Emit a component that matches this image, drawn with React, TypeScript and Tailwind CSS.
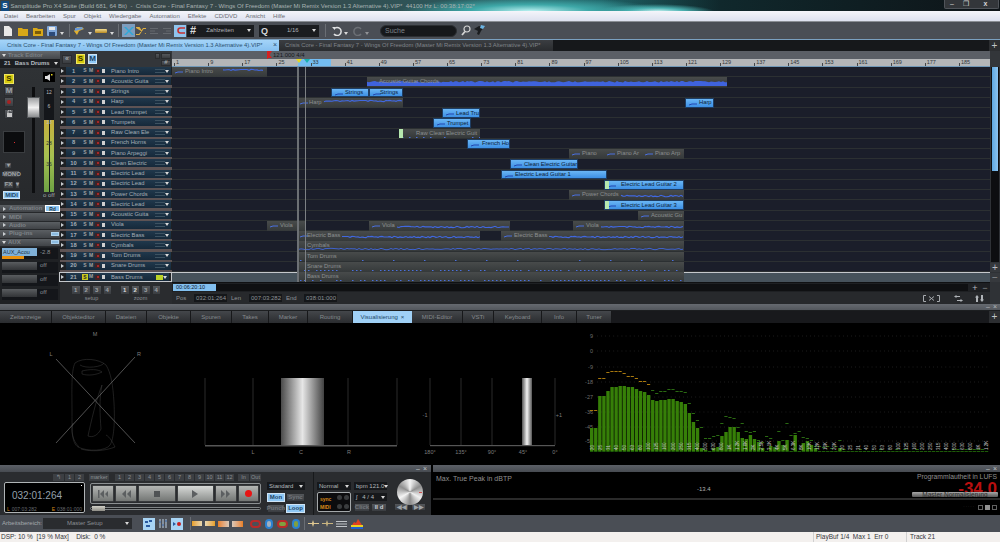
import * as React from "react";

const tracks = ["Piano Intro", "Acoustic Guita", "Strings", "Harp", "Lead Trumpet", "Trumpets", "Raw Clean Ele", "French Horns", "Piano Arpeggi", "Clean Electric", "Electric Lead", "Electric Lead", "Power Chords", "Electric Lead", "Acoustic Guita", "Viola", "Electric Bass", "Cymbals", "Tom Drums", "Snare Drums", "Bass Drums"];

const menu = ["Datei", "Bearbeiten", "Spur", "Objekt", "Wiedergabe", "Automation", "Effekte", "CD/DVD", "Ansicht", "Hilfe"];

const bottomTabs = [
  { name: "Zeitanzeige", w: 52 }, { name: "Objekteditor", w: 54 }, { name: "Dateien", w: 41 }, { name: "Objekte", w: 44 },
  { name: "Spuren", w: 41 }, { name: "Takes", w: 37 }, { name: "Marker", w: 39 }, { name: "Routing", w: 45 },
  { name: "Visualisierung", w: 59, active: true }, { name: "MIDI-Editor", w: 51 }, { name: "VSTi", w: 31 },
  { name: "Keyboard", w: 48 }, { name: "Info", w: 35 }, { name: "Tuner", w: 35 },
];

type Clip = {
  row: number; x0: number; x1: number; label: string; blue?: boolean; off: number;
  wave?: "line" | "band" | "dots" | "dense"; fade?: boolean; seed: number; from?: number; to?: number; high?: boolean;
};

const clips: Clip[] = [
  { row: 0, x0: 172, x1: 267, label: "Piano Intro", off: 13, wave: "line", seed: 3, from: 51, to: 91, high: true },
  { row: 1, x0: 367, x1: 727, label: "Acoustic Guitar Chords", off: 12, wave: "band", seed: 5 },
  { row: 2, x0: 331, x1: 369, label: "Strings", blue: true, off: 13, seed: 7 },
  { row: 2, x0: 369, x1: 403, label: "Strings", blue: true, off: 10, seed: 8 },
  { row: 3, x0: 297, x1: 403, label: "Harp", off: 12, wave: "line", seed: 9, from: 27, high: true },
  { row: 3, x0: 685, x1: 714, label: "Harp", blue: true, off: 13, seed: 10 },
  { row: 4, x0: 442, x1: 480, label: "Lead Tru", blue: true, off: 13, seed: 11 },
  { row: 5, x0: 433, x1: 471, label: "Trumpet", blue: true, off: 13, seed: 12 },
  { row: 6, x0: 399, x1: 480, label: "Raw Clean Electric Guit", off: 17, wave: "dots", fade: true, seed: 13 },
  { row: 7, x0: 467, x1: 510, label: "French Ho", blue: true, off: 14, seed: 14 },
  { row: 8, x0: 569, x1: 604, label: "Piano", off: 13, seed: 15 },
  { row: 8, x0: 604, x1: 642, label: "Piano Ar", off: 13, seed: 16 },
  { row: 8, x0: 642, x1: 684, label: "Piano Arp", off: 13, seed: 17 },
  { row: 9, x0: 510, x1: 578, label: "Clean Electric Guitar", blue: true, off: 13, seed: 18 },
  { row: 10, x0: 501, x1: 607, label: "Electric Lead Guitar 1", blue: true, off: 13, seed: 19 },
  { row: 11, x0: 604, x1: 684, label: "Electric Lead Guitar 2", blue: true, off: 16, fade: true, seed: 20 },
  { row: 12, x0: 569, x1: 684, label: "Power Chords", off: 13, wave: "line", seed: 21, from: 52 },
  { row: 13, x0: 604, x1: 684, label: "Electric Lead Guitar 3", blue: true, off: 16, fade: true, seed: 22 },
  { row: 14, x0: 638, x1: 684, label: "Acoustic Gu", off: 13, seed: 23 },
  { row: 15, x0: 267, x1: 305, label: "Viola", off: 13, seed: 24 },
  { row: 15, x0: 369, x1: 510, label: "Viola", off: 13, wave: "line", seed: 25, from: 28 },
  { row: 15, x0: 573, x1: 684, label: "Viola", off: 13, wave: "line", seed: 26, from: 28 },
  { row: 16, x0: 297, x1: 480, label: "Electric Bass", off: 10, wave: "line", seed: 27, from: 45 },
  { row: 16, x0: 501, x1: 684, label: "Electric Bass", off: 13, wave: "line", seed: 28, from: 48 },
  { row: 17, x0: 297, x1: 684, label: "Cymbals", off: 10, wave: "dense", seed: 29 },
  { row: 18, x0: 297, x1: 684, label: "Tom Drums", off: 10, wave: "dots", seed: 30 },
  { row: 19, x0: 297, x1: 684, label: "Snare Drums", off: 10, wave: "dots", seed: 31 },
  { row: 20, x0: 297, x1: 684, label: "Bass Drums", off: 10, wave: "dots", seed: 32 },
];

// small repeatable noise for the wave forms
const rnd = (i: number) => {
  const v = Math.sin(i * 12.9898) * 43758.5453;
  return v - Math.floor(v);
};

function ClipWave({ clip, w }: { clip: Clip; w: number }) {
  if (clip.wave === "band") {
    const pts: string[] = [];
    for (let x = 0; x <= w; x += 2) pts.push(`${x},${5.5 - rnd(x + clip.seed) * 1.6}`);
    return (
      <svg className="absolute inset-0" width={w} height={10}>
        <polygon points={`0,9 ${pts.join(" ")} ${w},9`} fill="#3f63dd" />
      </svg>
    );
  }
  if (clip.wave === "dots") {
    const items: number[] = [];
    const step = clip.row === 18 ? 31 : clip.row === 6 ? 7 : 4;
    for (let x = 3; x < w; x += step) if (rnd(x + clip.seed) > 0.3) items.push(x);
    return (
      <svg className="absolute inset-0" width={w} height={10}>
        {items.map((x) => <rect key={x} x={x} y={8} width="1.5" height="1" fill="#4a70e0" />)}
      </svg>
    );
  }
  const mini = <polyline points={`3,6 6,5 ${Math.min(11, w)},5`} fill="none" stroke={clip.blue ? "#2346b0" : "#4a70e0"} strokeWidth="1" />;
  if (clip.wave) {
    const pts: string[] = [];
    const base = clip.wave === "dense" ? 8 : clip.high ? 3 : 6;
    for (let x = clip.from ?? 0; x <= (clip.to ?? w); x += 2) pts.push(`${x},${base + (rnd(x + clip.seed) - 0.5) * 1.4}`);
    return (
      <svg className="absolute inset-0" width={w} height={10}>
        {clip.wave !== "dense" && mini}
        <polyline points={pts.join(" ")} fill="none" stroke="#4168e0" strokeWidth={clip.wave === "dense" ? 0.9 : 1.1} />
      </svg>
    );
  }
  return <svg className="absolute inset-0" width={w} height={10}>{mini}</svg>;
}

function ClipBox({ clip }: { clip: Clip }) {
  const w = clip.x1 - clip.x0;
  return (
    <div
      className={
        clip.blue
          ? "absolute overflow-hidden bg-linear-to-b from-[#6ab6f5] to-[#3c8fe4] border border-[#1e3d63]"
          : "absolute overflow-hidden bg-linear-to-b from-[#484b4b] to-[#35393a]"
      }
      style={{ left: clip.x0 - 172, top: clip.row * 10.25, width: w, height: 9.75 }}
    >
      <ClipWave clip={clip} w={w} />
      {clip.fade && <div className="absolute left-0 top-0 bottom-0 w-[4px] bg-[#b6e8ae]" />}
      <span
        className={
          clip.blue
            ? "absolute top-[0.5px] whitespace-nowrap text-[5.8px] leading-[7px] text-[#0c1c34]"
            : "absolute top-[1px] whitespace-nowrap text-[5.8px] leading-[7px] text-[#8c9091]"
        }
        style={{ left: clip.off }}
      >
        {clip.label}
      </span>
    </div>
  );
}

function Caret({ className = "" }: { className?: string }) {
  return <span className={`inline-block border-x-[2px] border-t-[3px] border-x-transparent border-t-[#d8d8d8] ${className}`} />;
}

function TrackRow({ n, name, selected }: { n: number; name: string; selected?: boolean }) {
  return (
    <div className={selected ? "flex flex-col h-[10.25px] border border-[#c5c8cc] -ml-[1px] relative" : "flex flex-col h-[10.25px]"}>
      <div className="flex h-[8px] items-center">
        <span className="w-[3px] ml-[1px] mr-[2px] border-y-[2px] border-l-[3px] border-y-transparent border-l-[#c8ccd0]" />
        <div className="flex flex-1 h-full items-center bg-linear-to-b from-[#20384c] to-[#16293a] text-[5.8px] text-[#a4aeb6]">
          <span className="w-[15px] text-center font-bold">{n}</span>
          <span className={selected ? "w-[6px] h-[6px] ml-[1px] bg-[#c8c820] text-[#222] text-center text-[5px] leading-[6px] font-bold" : "w-[6px] ml-[1px] text-center text-[5px] font-bold text-[#a0a0a0]"}>S</span>
          <span className="w-[6px] text-center text-[5px] font-bold text-[#a0a0a0]">M</span>
          <span className="w-[5px] h-[5px] ml-[1px] bg-[#3d2327] flex items-center justify-center"><span className="w-[2px] h-[2px] rounded-full bg-[#c92a2a]" /></span>
          <span className="w-[3px] h-[4px] ml-[2px] bg-[#d0d0d0]" />
          <span className="w-[43px] ml-[6px] whitespace-nowrap overflow-hidden">{name}</span>
          <span className={selected ? "w-[7px] h-[5px] ml-[2px] border-y border-[#bcd42a] bg-[#bcd42a]" : "w-[10px] h-[4px] ml-[1px] border-y border-[#3d5261]"} />
          <Caret className="ml-auto mr-[2px]" />
        </div>
        <div className="w-[5px] h-full ml-[1px] bg-[#222528]" />
      </div>
      <div className={selected ? "flex-1" : "flex-1 bg-[#5d5354]"} />
    </div>
  );
}

function SmallBtn({ children, w, lit, yellow, className = "" }: { children?: React.ReactNode; w: number; lit?: boolean; yellow?: boolean; className?: string }) {
  return (
    <div
      className={
        (lit ? "bg-[#8fc8f5] text-[#214566] border-[#cfe4f5] " : yellow ? "bg-[#d6c90e] text-[#3a3500] border-[#efe760] " : "bg-linear-to-b from-[#54575b] to-[#3a3d41] text-[#9fa3a7] border-[#2a2c2f] ") +
        "flex items-center justify-center border text-[6px] font-bold whitespace-nowrap " + className
      }
      style={{ width: w }}
    >
      {children}
    </div>
  );
}

function SectionBar({ label, open, pill, rd }: { label: string; open?: boolean; pill?: boolean; rd?: boolean }) {
  return (
    <div className="flex items-center h-[8.4px] bg-linear-to-b from-[#5b5f63] to-[#404347] border-b border-[#26282b] text-[6px] text-[#7d8287] font-bold">
      {open ? <Caret className="ml-[2px] mr-[2px]" /> : <span className="ml-[3px] mr-[3px] border-y-[2px] border-l-[3px] border-y-transparent border-l-[#c8ccd0]" />}
      <span>{label}</span>
      {rd && <span className="ml-auto w-[15px] h-full bg-[#8fc8f5] text-[#234] text-center text-[5px] leading-[7px] border border-white">Rd</span>}
      {pill && <span className="ml-auto mr-[1px] w-[8px] h-[4px] bg-[#8cbbe0] border border-[#aed3ee]" />}
    </div>
  );
}

function Send({ off }: { off?: boolean }) {
  return (
    <div className="flex flex-col h-[13px] mt-[0.5px] mx-[2px]">
      <div className="flex h-[8px] items-center bg-[#14161a] text-[6px]">
        {off ? (
          <span className="w-[35px] h-full bg-linear-to-b from-[#5a5d60] to-[#323437]" />
        ) : (
          <span className="w-[35px] h-full bg-[#7fb0d8] text-[#203040] text-[5.5px] leading-[8px] pl-[1px] whitespace-nowrap overflow-hidden">AUX_Acou</span>
        )}
        <span className="ml-[3px] text-[#8a8e92]">{off ? "off" : "-2.8"}</span>
      </div>
      <div className="h-[3px] bg-[#14161a] relative">
        {!off && <div className="absolute inset-y-0 left-0 w-[22px] bg-[#e8900e]" />}
      </div>
    </div>
  );
}

function TrackEditor() {
  return (
    <div className="flex flex-col w-[60px] bg-[#2d3033]">
      <div className="flex items-center h-[8px] bg-linear-to-b from-[#64686c] to-[#44474b] text-[6px] font-bold text-[#7b8084]">
        <Caret className="mx-[2px]" />Track Editor
      </div>
      <div className="flex items-center h-[9px] bg-[#1c1e21] text-[6px] text-[#b6bcc2] font-bold">
        <span className="ml-[4px]">21</span><span className="ml-[4px]">Bass Drums</span><Caret className="ml-auto mr-[2px]" />
      </div>
      <div className="relative h-[133px] bg-linear-to-b from-[#2f3235] to-[#27292c]">
        <div className="absolute left-[4px] top-[6px] flex flex-col gap-[1.5px]">
          <SmallBtn w={10} yellow className="h-[10px] text-[8px]">S</SmallBtn>
          <SmallBtn w={10} className="h-[10px] text-[8px]">M</SmallBtn>
          <SmallBtn w={10} className="h-[10px]"><span className="w-[4px] h-[4px] rounded-full bg-[#a82222]" /></SmallBtn>
          <SmallBtn w={10} className="h-[10px]">
            <svg width="7" height="7" viewBox="0 0 7 7"><rect x="1" y="3" width="5" height="4" fill="#c8c8c8" /><path d="M2 3V1.5a1.5 1.5 0 0 1 3 0" fill="none" stroke="#c8c8c8" /></svg>
          </SmallBtn>
        </div>
        <div className="absolute left-[43px] top-[4px] w-[12px] h-[10px] bg-black flex items-center justify-center">
          <svg width="8" height="7" viewBox="0 0 8 7"><path d="M0 2h2l3-2v7l-3-2H0z" fill="#e0e0e0" /><rect x="6" y="0" width="1.5" height="1.5" fill="#e8d820" /></svg>
        </div>
        <div className="absolute left-[32px] top-[19px] w-[3px] h-[106px] bg-[#0d0e10]" />
        <div className="absolute left-[27px] top-[29px] w-[13px] h-[21px] bg-linear-to-b from-[#9ea0a2] via-[#f0f0f0] to-[#8b8d8f] border border-[#55585b]" />
        <div className="absolute left-[44px] top-[20px] w-[10px] h-[104px] bg-[#14161a] overflow-hidden">
          <div className="absolute left-0 right-[5px] top-[32px] bottom-0 bg-linear-to-b from-[#c8b03c] via-[#a6c050] to-[#6ea244]" />
          <div className="absolute left-[6px] right-0 top-[32px] bottom-0 bg-linear-to-b from-[#c8b03c] via-[#a6c050] to-[#6ea244]" />
          <div className="absolute inset-x-0 top-[1px] text-center text-[5px] leading-[6px] text-[#bbb]">
            <p>12</p><p className="mt-[8px]">6</p><p className="mt-[10px]">18</p><p className="mt-[15px] text-[#333]">28</p><p className="mt-[15px] text-[#333]">36</p>
          </div>
        </div>
        <div className="absolute left-[3px] top-[63px] w-[22px] h-[22px] bg-[#0b0c0e] border border-[#3a3d40] flex items-center justify-center">
          <span className="w-[1px] h-[1px] bg-[#e03030]" />
        </div>
        <div className="absolute left-[4px] top-[94px]"><SmallBtn w={8} className="h-[7px]">▾</SmallBtn></div>
        <div className="absolute left-[3px] top-[102px] flex flex-col gap-[2.5px]">
          <SmallBtn w={17} className="h-[8px] text-[5.5px]">MONO</SmallBtn>
          <div className="flex gap-[1px]"><SmallBtn w={11} className="h-[8px]">FX</SmallBtn><SmallBtn w={5} className="h-[8px]">▾</SmallBtn></div>
          <SmallBtn w={17} lit className="h-[8px] text-[5.5px]">MIDI</SmallBtn>
        </div>
        <span className="absolute left-[43px] top-[124px] text-[6px] leading-[7px] text-[#a2a6a8]">o off</span>
      </div>
      <div className="h-[4px]" />
      <SectionBar label="Automation" rd />
      <SectionBar label="MIDI" />
      <SectionBar label="Audio" />
      <SectionBar label="Plug-ins" pill />
      <SectionBar label="AUX" open pill />
      <div className="flex-1 bg-[#1f2124] pt-[1px]">
        <Send /><Send off /><Send off /><Send off />
      </div>
    </div>
  );
}

function TrackList() {
  return (
    <div className="flex flex-col w-[112px] bg-[#1e2023]">
      <div className="flex items-center h-[16px] bg-[#33363a] relative">
        <SmallBtn w={10} className="ml-[2px] h-[9px] text-[7px]">«</SmallBtn>
        <SmallBtn w={9} yellow className="ml-[4px] h-[10px] text-[8px]">S</SmallBtn>
        <SmallBtn w={9} lit className="ml-[3px] h-[10px] text-[8px]">M</SmallBtn>
        <div className="ml-auto flex flex-col gap-[1px] items-end mr-[1px]">
          <div className="flex gap-[1px]"><SmallBtn w={5} className="h-[6px]" /><SmallBtn w={10} className="h-[6px]" /></div>
          <SmallBtn w={10} className="h-[6px] text-[6px]">#</SmallBtn>
        </div>
      </div>
      {tracks.map((t, i) => <TrackRow key={i} n={i + 1} name={t} selected={i === 20} />)}
      <div className="flex flex-1 justify-center gap-[8px] bg-[#2a2c2f] pt-[3px]">
        <div className="flex flex-col items-center">
          <div className="flex gap-[1px]">{["1", "2", "3", "4"].map((n) => <SmallBtn key={n} w={9.5} className="h-[10px] text-[#5e6165]">{n}</SmallBtn>)}</div>
          <span className="text-[5.5px] leading-[6px] text-[#8c9094]">setup</span>
        </div>
        <div className="flex flex-col items-center">
          <div className="flex gap-[1px]">
            <SmallBtn w={9.5} className="h-[10px] text-[#ddd]">1</SmallBtn>
            <SmallBtn w={9.5} className="h-[10px] text-[#ddd]">2</SmallBtn>
            <SmallBtn w={9.5} className="h-[10px] text-[#5e6165]">3</SmallBtn>
            <SmallBtn w={9.5} className="h-[10px] text-[#5e6165]">4</SmallBtn>
          </div>
          <span className="text-[5.5px] leading-[6px] text-[#8c9094]">zoom</span>
        </div>
      </div>
    </div>
  );
}

function Field({ label, value, w }: { label: string; value: string; w: number }) {
  return (
    <div className="flex items-center text-[6px] text-[#8f9396]">
      <span className="w-[22px] pl-[4px]">{label}</span>
      <span className="h-[8px] bg-[#15171a] text-right pr-[1px] leading-[8px]" style={{ width: w }}>{value}</span>
    </div>
  );
}

function Arranger() {
  const labels: number[] = [];
  for (let b = 1; b <= 185; b += 8) labels.push(b);
  return (
    <div className="flex flex-col w-[818px]">
      <div className="relative h-[8px] bg-[#5b5f66]">
        <svg className="absolute left-[95px] top-0" width="5" height="8"><path d="M0 0h5L2.5 4 5 7H1v1H0z" fill="#d62020" /></svg>
        <span className="absolute left-[101px] top-0 text-[6px] leading-[8px] text-[#15181c]">121.000 4/4</span>
      </div>
      <div className="relative flex h-[8px] bg-[#b4b6b8] pl-[2px] border-b border-[#7098b8]">
        <div className="absolute left-[126px] top-0 bottom-0 w-[33px] bg-[#74bdf2]" />
        <span className="absolute left-[124px] top-0 border-x-[3px] border-t-[4px] border-x-transparent border-t-[#e8d820]" />
        <span className="absolute left-[132px] top-0 border-x-[3px] border-t-[4px] border-x-transparent border-t-[#18b0b0]" />
        {labels.map((b) => (
          <div key={b} className="relative flex h-full w-[34.13px] shrink-0 items-center text-[5.5px] text-[#33363a]">
            <span className="w-[1px] h-[3px] mt-[3px] mr-[1px] bg-[#44474b]" />{b}
          </div>
        ))}
      </div>
      <div className="relative h-[215.25px] bg-[#1b1e2a] overflow-hidden">
        {tracks.map((t, i) => (
          <div key={i} className={i === 20 ? "h-[10.25px] bg-[#46525b] border-t-[1.5px] border-[#c5c8cc]" : "h-[10.25px] border-b border-[#2c3032]"} />
        ))}
        {clips.map((c, i) => <ClipBox key={i} clip={c} />)}
        <div className="absolute left-[124.5px] top-0 bottom-0 w-[2px] bg-[#6c7074]" />
        <div className="absolute left-[133px] top-0 bottom-0 w-[1px] bg-[#7c8084]" />
      </div>
      <div className="flex items-center h-[10px] bg-[#1e2023] border-t border-[#101113]">
        <span className="ml-[1px] w-[43px] h-[7px] bg-[#82c0f0] text-[5.5px] leading-[7px] text-[#102030] pl-[3px]">00:06:20:10</span>
        <div className="flex-1 h-[7px] bg-[#0f1012]" />
        <span className="w-[10px] ml-[2px] text-center text-[9px] leading-[8px] text-[#b8bcc0]">+</span>
        <span className="w-[10px] text-center text-[9px] leading-[8px] text-[#8c9094]">−</span>
      </div>
      <div className="flex flex-1 items-center bg-[#27292c]">
        <Field label="Pos" value="032:01:264" w={33} />
        <Field label="Len" value="007:03:282" w={33} />
        <Field label="End" value="038:01:000" w={33} />
        <svg className="ml-auto mr-[14px]" width="17" height="7" viewBox="0 0 17 7" fill="none" stroke="#a6aaae"><path d="M3 .5H.5v6H3M14 .5h2.5v6H14M6 1.5l5 4M11 1.5l-5 4" /></svg>
        <svg className="mr-[12px]" width="9" height="7" viewBox="0 0 9 7" fill="#b0b4b8"><path d="M0 1.5L2.5 0v1H6v1H2.5v1zM9 5.5L6.5 7V6H3V5h3.500V4z" /></svg>
        <svg className="mr-[6px]" width="9" height="7" viewBox="0 0 9 7" fill="#b0b4b8"><path d="M2 0l2 2.500H3V7H1V2.500H0zM7 7L5 4.500h1V0h2v4.500h1z" /></svg>
      </div>
    </div>
  );
}

function Scroller() {
  return (
    <div className="flex flex-col flex-1 bg-[#2f3236]">
      <div className="h-[16px] bg-[#33363a]" />
      <div className="relative mx-[1px] h-[195px] bg-[#0d0e10]">
        <div className="absolute inset-x-[1px] top-0 h-[104px] bg-linear-to-r from-[#5ea8e0] to-[#8cc4f0]" />
      </div>
      <span className="mt-[1px] h-[9px] text-center text-[10px] leading-[9px] text-[#b8bcc0] bg-[#36393d]">+</span>
      <span className="mt-[1px] h-[9px] text-center text-[10px] leading-[9px] text-[#8c9094] bg-[#36393d]">−</span>
    </div>
  );
}

function Goniometer() {
  return (
    <svg width="190" height="141" viewBox="0 0 190 141" className="shrink-0">
      <g fill="#7d7d7d" fontSize="5.500" textAnchor="middle">
        <text x="95" y="13">M</text><text x="51" y="33">L</text><text x="139" y="33">R</text>
      </g>
      <g fill="none" stroke="#3e3e3e" strokeWidth="0.5">
        <path d="M75 40c8-6 24-4 31 2 5 8 7 20 8 38 1 18 0 36-4 42-4 6-22 7-32 2-6-4-6-14-6-34 0-22-1-42 3-50z" />
        <path d="M80 42c6 4 22 2 24-2M82 48c8-2 16-2 20 1-6 3-14 4-20 2zM102 62c-3 14-2 30-1 44-3 6-8 9-13 7 3-14 8-36 14-51zM73 100c-3 8 0 18 6 24M106 112c4 2 7 8 9 12-10 4-24 5-34 2" />
      </g>
      <g stroke="#747474" strokeWidth="0.7">
        <path d="M56 36L135 120M135 34L56 120" />
      </g>
    </svg>
  );
}

function Balance() {
  return (
    <svg width="220" height="141" viewBox="0 0 220 141" className="shrink-0">
      <defs>
        <linearGradient id="bal" x1="0" x2="1" y1="0" y2="0">
          <stop offset="0" stopColor="#4a4a4a" /><stop offset="0.5" stopColor="#e6e6e6" /><stop offset="1" stopColor="#424242" />
        </linearGradient>
      </defs>
      <path d="M15 55V122M63 55V122M158 55V122M207 55V122" stroke="#2a2a2a" />
      <rect x="91" y="55" width="43" height="67" fill="url(#bal)" />
      <rect x="15" y="122" width="192" height="1.500" fill="#565656" />
      <g fill="#7d7d7d" fontSize="5.500" textAnchor="middle">
        <text x="63" y="131">L</text><text x="111" y="131">C</text><text x="159" y="131">R</text>
      </g>
    </svg>
  );
}

function Phase() {
  return (
    <svg width="160" height="141" viewBox="0 0 160 141" className="shrink-0">
      <defs>
        <linearGradient id="pha" x1="0" x2="1" y1="0" y2="0">
          <stop offset="0" stopColor="#555" /><stop offset="0.5" stopColor="#f4f4f4" /><stop offset="1" stopColor="#555" />
        </linearGradient>
      </defs>
      <path d="M20 55V122M51 55V122M82 55V122M113 55V122M145 55V122" stroke="#2a2a2a" />
      <rect x="112" y="55" width="10" height="67" fill="url(#pha)" />
      <rect x="20" y="122" width="125" height="1.200" fill="#565656" />
      <g fill="#7d7d7d" fontSize="5.500" textAnchor="middle">
        <text x="20" y="131">180°</text><text x="51" y="131">135°</text><text x="82" y="131">90°</text><text x="113" y="131">45°</text><text x="145" y="131">0°</text>
        <text x="15" y="94">-1</text><text x="149" y="94">+1</text>
      </g>
    </svg>
  );
}

// bar tops read off the picture, in screen rows
const barTops = [428, 428, 396, 396, 391, 387, 387, 386, 386, 387, 387, 389, 391, 392, 395, 400, 401, 400, 400, 399, 399, 401, 402, 404, 413, 422, 428, 448, 450, 451, 448, 447, 436, 432, 427, 427, 432, 438, 439, 435, 439, 442, 448, 451, 446, 448, 441, 445, 440, 451, 435, 451, 443, 441, 445, 448, 451, 451, 451, 451, 451, 448];
const peakTops = [410, 410, 378, 378, 372, 371, 371, 371, 373, 376, 376, 378, 381, 381, 384, 390, 393, 391, 391, 389, 389, 391, 391, 392, 403, 413, 420, 427, 438, 438, 436, 435, 423, 416, 417, 418, 427, 423, 431, 432, 431, 440, 442, 436, 438, 447, 431, 440, 423, 435, 433, 431, 437, 438, 440, 446, 446, 447, 446, 448, 446, 440];
const freqs = ["20", "25", "31", "40", "50", "63", "80", "100", "125", "160", "200", "250", "315", "400", "500", "630", "800", "1K", "1.2K", "1.6K", "2K", "2.5K", "3.1K", "4K", "5K", "6.3K", "8K", "10K", "12K", "16K", "20K"];

const rand = (i: number) => i < 62 || rnd(i) > 0.5;

function Analyzer() {
  const rows = [{ l: "9", y: 336 }, { l: "0", y: 351 }, { l: "-9", y: 367 }, { l: "-18", y: 382 }, { l: "-27", y: 397 }, { l: "-36", y: 412 }, { l: "-45", y: 427 }, { l: "-54", y: 441 }];
  const top = 323;
  const labels: string[] = [];
  for (let i = 0; i < 50; i++) labels.push(freqs[i % freqs.length]);
  const pitch = 4.07;
  const count = 98;
  return (
    <svg width="430" height="141" viewBox="0 0 430 141" className="shrink-0">
      {rows.map((r) => (
        <g key={r.l}>
          <text x="23" y={r.y - top + 2} fill="#6e6e6e" fontSize="5.500" textAnchor="end">{r.l}</text>
          <line x1="27" x2="420" y1={r.y - top} y2={r.y - top} stroke="#3a3a3a" strokeWidth="0.7" strokeDasharray="0.7 3.4" />
        </g>
      ))}
      {Array.from({ length: count }).map((_, i) => {
        const x = 20 + i * pitch;
        const t = barTops[i] ?? 451;
        const p = peakTops[i] ?? 449;
        return (
          <g key={i}>
            {t < 451 && <rect x={x} y={t - top} width={3.400} height={451 - t} fill="#367f08" />}
            <rect x={x} y={451 - top} width={3.400} height={1} fill="#1d5a08" />
            {rand(i) && <rect x={x} y={p - top} width={3.200} height={1} fill={i < 15 ? "#a8780e" : "#2a6a12"} />}
          </g>
        );
      })}
      {labels.map((l, i) => (
        <text key={i} x={0} y={0} fontSize="4.500" fill="#c4c4c4" textAnchor="start" transform={`translate(${24 + i * 8.05},127) rotate(-90)`}>{l}</text>
      ))}
    </svg>
  );
}

function Icon({ d, fill = "#ccc", w = 10, h = 10, vb = "0 0 10 10", className = "" }: { d: string; fill?: string; w?: number; h?: number; vb?: string; className?: string }) {
  return <svg width={w} height={h} viewBox={vb} className={`shrink-0 ${className}`}><path d={d} fill={fill} /></svg>;
}

function Sep({ className = "" }: { className?: string }) {
  return <span className={`w-[1px] h-[13px] bg-[#6a6e74] shrink-0 ${className}`} />;
}

function Toolbar() {
  return (
    <div className="flex items-center h-[17px] bg-[#4a4e55] pl-[3px]">
      <Icon d="M1 0h5l3 3v7H1z" fill="#e8e8e8" />
      <Icon d="M0 2h4l1 1h5v7H0z" fill="#d8a818" className="ml-[5px]" />
      <svg width="10" height="10" viewBox="0 0 10 10" className="ml-[5px] shrink-0"><path d="M0 2h4l1 1h5v7H0z" fill="#d8a818" /><rect x="2" y="5" width="6" height="3" fill="#7a5c08" /></svg>
      <svg width="10" height="10" viewBox="0 0 10 10" className="ml-[4px] shrink-0"><rect width="10" height="10" rx="1" fill="#7ea6d8" /><rect x="2" y="1" width="6" height="3" fill="#e8e8e8" /><rect x="2" y="6" width="6" height="4" fill="#2c4a78" /></svg>
      <Caret className="ml-[3px] mt-[6px]" />
      <Sep className="ml-[5px]" />
      <svg width="12" height="10" viewBox="0 0 12 10" className="ml-[3px] shrink-0"><path d="M1 5l3-4h5l2 2-5 2-2 4z" fill="#e0b030" /><path d="M2 2l7-1 1 2-8 2z" fill="#6a9ad8" /></svg>
      <Caret className="ml-[3px] mt-[6px]" />
      <div className="ml-[3px] w-[12px] h-[4px] rounded-[1px] bg-linear-to-b from-[#f0dc90] to-[#b88a18]" />
      <Caret className="ml-[3px] mt-[6px]" />
      <Sep className="ml-[4px]" />
      <div className="ml-[3px] w-[13px] h-[13px] bg-[#7e9dbd] flex items-center justify-center">
        <Icon d="M0 1h2l3 3 3-3h2L6 5l4 4H8L5 6 2 9H0l4-4z" fill="#2ea8d8" />
      </div>
      <Icon d="M0 2h3l4 6h3M0 8h3l4-6h3v1H7.500L3.500 9H0zM0 1h3.500l4 6H10v1H7L3 2H0z" fill="#e0b040" className="ml-[1px]" />
      <svg width="8" height="8" viewBox="0 0 8 8" className="ml-[4px] shrink-0" stroke="#64686e"><path d="M0 1.500h8M0 4h5M0 6.500h8" /></svg>
      <svg width="8" height="8" viewBox="0 0 8 8" className="ml-[5px] shrink-0" stroke="#64686e"><path d="M0 1.500h8M3 4h5M0 6.500h8" /></svg>
      <div className="ml-[3px] w-[12px] h-[12px] bg-[#8fc4ee] flex items-center justify-center">
        <svg width="9" height="7" viewBox="0 0 9 7" fill="none" stroke="#c83030" strokeWidth="1.600"><path d="M9 1H4.500a2.500 2.500 0 0 0 0 5H9" /></svg>
      </div>
      <div className="flex items-center ml-[1px] w-[67px] h-[12px] bg-[#1a1c1f]">
        <span className="ml-[3px] text-[11px] leading-[11px] font-bold text-[#d8d8d8]">#</span>
        <span className="ml-[10px] text-[6px] text-[#b0b4b8]">Zahlzeiten</span>
        <Caret className="ml-auto mr-[3px]" />
      </div>
      <div className="flex items-center ml-[5px] w-[60px] h-[12px] bg-[#1a1c1f]">
        <span className="ml-[2px] text-[9px] leading-[10px] font-bold text-[#d8d8d8]">Q</span>
        <span className="ml-[19px] text-[6px] text-[#b0b4b8]">1/16</span>
        <Caret className="ml-auto mr-[3px]" />
      </div>
      <Sep className="ml-[6px]" />
      <svg width="10" height="10" viewBox="0 0 10 10" fill="none" stroke="#e0e2e4" strokeWidth="1.500" className="ml-[6px] shrink-0"><path d="M2 3a4 4 0 1 1 0 5" /><path d="M0 1l3 0 0 3z" fill="#e0e2e4" stroke="none" /></svg>
      <Caret className="ml-[2px] mt-[6px]" />
      <svg width="10" height="10" viewBox="0 0 10 10" fill="none" stroke="#6c7076" strokeWidth="1.500" className="ml-[5px] shrink-0"><path d="M8 3a4 4 0 1 0 0 5" /></svg>
      <Caret className="ml-[2px] mt-[6px] opacity-50" />
      <div className="ml-[11px] w-[77px] h-[12px] rounded-full bg-[#16181b] border border-[#2c2f33] pl-[4px] text-[7px] leading-[10px] text-[#7e8286]">Suche</div>
      <svg width="10" height="11" viewBox="0 0 10 11" fill="none" stroke="#d4d4d4" strokeWidth="1.200" className="ml-[4px] shrink-0"><circle cx="6" cy="4" r="3" /><path d="M4 6.500L1 10" strokeWidth="1.800" /></svg>
      <svg width="12" height="11" viewBox="0 0 12 11" className="ml-[2px] shrink-0"><path d="M1 4l5-3 5 1-3 4-2 4-2-1 1-3z" fill="#1a1c1f" /><path d="M8 0l4 1-2 3-3-1z" fill="#6cb4e4" /></svg>
    </div>
  );
}

function TabBar() {
  return (
    <div className="flex h-[12px] bg-[#16181b] border-t border-[#7aa0c0]">
      <div className="flex items-center w-[279px] bg-linear-to-b from-[#a4d4f8] to-[#86c0f0] text-[#2a4f6d] text-[5.85px] pl-[7px]">
        <span className="whitespace-nowrap">Crisis Core - Final Fantasy 7 - Wings Of Freedom (Master Mi Remix Version 1.3 Alternative 4).VIP*</span>
        <span className="ml-auto mr-[2px] text-[7px]">×</span>
      </div>
      <div className="flex items-center w-[274px] bg-linear-to-b from-[#3b3e42] to-[#2a2c2f] text-[#80848a] text-[5.85px] pl-[6px] whitespace-nowrap">
        Crisis Core - Final Fantasy 7 - Wings Of Freedom (Master Mi Remix Version 1.3 Alternative 4).VIP*
      </div>
      <div className="flex-1" />
      <span className="w-[11px] bg-[#2c2e31] text-center text-[10px] leading-[11px] text-[#c0c4c8]">+</span>
    </div>
  );
}

function TransportBtn({ w, children, wide }: { w: number; children: React.ReactNode; wide?: boolean }) {
  return (
    <div className={(wide ? "from-[#d8dad8] to-[#8d908e] " : "from-[#b4b6b4] to-[#747775] ") + "flex items-center justify-center h-full bg-linear-to-b border border-[#3a3c3e] rounded-[1px]"} style={{ width: w }}>
      {children}
    </div>
  );
}

function Mini({ w, children, className = "" }: { w: number; children?: React.ReactNode; className?: string }) {
  return (
    <span className={`h-[7px] bg-[#3c3f43] text-center text-[5.5px] leading-[7px] text-[#8b8f93] ${className}`} style={{ width: w }}>{children}</span>
  );
}

function Dropdown({ label, w, className = "" }: { label: string; w: number; className?: string }) {
  return (
    <div className={`flex items-center h-[8px] bg-[#16181b] text-[6px] text-[#b4b8bc] pl-[2px] whitespace-pre ${className}`} style={{ width: w }}>
      {label}<Caret className="ml-auto mr-[2px]" />
    </div>
  );
}

function Transport() {
  const markers = ["1", "2", "3", "4", "5", "6", "7", "8", "9", "10", "11", "12"];
  return (
    <div className="flex flex-col w-[431px] bg-[#2a2c2f]">
      <div className="flex items-center justify-end h-[7px] bg-linear-to-b from-[#5c6067] to-[#474b51] pr-[4px] text-[7px] leading-[7px] text-[#c0c4c8]">
        <span className="mr-[3px]">–</span><span>×</span>
      </div>
      <div className="flex flex-1">
        <div className="flex flex-col w-[264px]">
          <div className="flex items-center h-[9px] pl-[53px] gap-[1px] pt-[1px]">
            <Mini w={11}>↰</Mini><Mini w={9}>1</Mini><Mini w={9}>2</Mini>
            <Mini w={20} className="ml-[4px]">marker</Mini>
            <div className="w-[4px]" />
            {markers.map((m) => <Mini key={m} w={9}>{m}</Mini>)}
            <Mini w={11} className="ml-[3px]">In</Mini><Mini w={11}>Out</Mini>
          </div>
          <div className="flex flex-1 pl-[4px] pt-[1px]">
            <div className="flex flex-col w-[81px] h-[31px] bg-black border border-[#b0b4b6] rounded-[2px] relative">
              <span className="absolute right-[2px] top-[2px] w-[1px] h-[1px] bg-white" />
              <span className="mt-[7px] ml-[7px] text-[10px] leading-[12px] text-[#94a0ac]">032:01:264</span>
              <div className="flex justify-between px-[2px] mt-[4px] text-[5px] leading-[6px] text-[#6a6e72]">
                <span><span className="text-[#d88a18] mr-[2px]">L</span>007:03:282</span>
                <span><span className="text-[#d88a18] mr-[2px]">E</span>038:01:000</span>
              </div>
            </div>
            <div className="flex flex-col w-[171px] ml-[5px] pt-[1px]">
              <div className="flex h-[21px] gap-[1px] rounded-[2px] border border-[#8c9092] p-[1px]">
                <TransportBtn w={22}><Icon d="M0 1h1.500v8H0zM6 1v8L2 5zM11 1v8L7 5z" fill="#5c5f61" /></TransportBtn>
                <TransportBtn w={22}><Icon d="M5 1v8L1 5zM10 1v8L6 5z" fill="#5c5f61" /></TransportBtn>
                <TransportBtn w={38}><span className="w-[6px] h-[6px] bg-[#505355]" /></TransportBtn>
                <TransportBtn w={38} wide><Icon d="M2 1l6 4-6 4z" fill="#5c5f61" /></TransportBtn>
                <TransportBtn w={22}><Icon d="M0 1l4 4-4 4zM5 1l4 4-4 4z" fill="#5c5f61" /></TransportBtn>
                <TransportBtn w={21}><span className="w-[7px] h-[7px] rounded-full bg-[#e81414]" /></TransportBtn>
              </div>
              <div className="relative mt-[3px] h-[3px] bg-[#1a1c1e] border border-[#808486] rounded-full">
                <div className="absolute -top-[2px] left-[1px] w-[13px] h-[5px] bg-linear-to-b from-[#d0cfc6] to-[#8e8d86]" />
              </div>
            </div>
          </div>
        </div>
        <div className="flex flex-col w-[41px] pt-[10px] gap-[2px] pl-[3px]">
          <Dropdown label="Standard" w={38} />
          <div className="flex gap-[1px] mt-[1px]">
            <SmallBtn w={18} lit className="h-[9px] text-[5.5px]">Mon</SmallBtn>
            <SmallBtn w={19} className="h-[9px] text-[5.5px] text-[#70747a]">Sync</SmallBtn>
          </div>
          <div className="flex gap-[1px]">
            <SmallBtn w={18} className="h-[9px] text-[5.5px] text-[#70747a]">Punch</SmallBtn>
            <SmallBtn w={19} lit className="h-[9px] text-[5.5px]">Loop</SmallBtn>
          </div>
        </div>
        <div className="w-[1px] ml-[8px] bg-[#17191b]" />
        <div className="flex flex-col w-[35px] ml-[3px] pt-[10px] gap-[2px]">
          <Dropdown label="Normal" w={34} />
          <div className="relative flex w-[34px] h-[20px] bg-[#0c0c0e] border border-[#a4a8aa] rounded-[2px] text-[5px] font-bold text-[#d88a18]">
            <span className="absolute left-[2px] top-[3px]">sync</span>
            <span className="absolute left-[2px] top-[11px]">MIDI</span>
            <span className="absolute right-[8px] top-[2px] w-[5px] h-[5px] rounded-full bg-[#3a3c3e]" />
            <span className="absolute right-[1px] top-[2px] w-[5px] h-[5px] rounded-full bg-[#3a3c3e]" />
            <span className="absolute right-[8px] top-[11px] w-[5px] h-[5px] rounded-full bg-[#3a3c3e]" />
            <span className="absolute right-[1px] top-[11px] w-[5px] h-[5px] rounded-full bg-[#3a3c3e]" />
          </div>
        </div>
        <div className="flex flex-col w-[35px] ml-[2px] pt-[10px] gap-[2px]">
          <Dropdown label="bpm 121.0" w={33} />
          <Dropdown label="ʃ   4 / 4" w={33} className="mt-[1px]" />
          <div className="flex gap-[1px]">
            <SmallBtn w={16} className="h-[9px] text-[5.5px] text-[#70747a]">Click</SmallBtn>
            <SmallBtn w={16} className="h-[9px] text-[5.5px] text-[#c8ccd0]">II d</SmallBtn>
          </div>
        </div>
        <div className="flex flex-col items-center flex-1 pt-[7px]">
          <div className="w-[26px] h-[26px] rounded-full bg-[conic-gradient(#f4f4f4,#8f8f8f,#f0f0f0,#8a8a8a,#f4f4f4,#8f8f8f,#f4f4f4)] relative">
            <span className="absolute right-[1px] top-[13px] w-[3px] h-[1px] bg-[#d05050]" />
          </div>
          <div className="flex gap-[2px] mt-[-2px]">
            <SmallBtn w={15} className="h-[8px] text-[6px]">◀◀</SmallBtn>
            <SmallBtn w={15} className="h-[8px] text-[6px]">▶▶</SmallBtn>
          </div>
        </div>
      </div>
    </div>
  );
}

function LoudnessPanel() {
  return (
    <div className="flex flex-col flex-1 ml-[2px] bg-black">
      <div className="flex items-center justify-end h-[7px] bg-linear-to-b from-[#5c6067] to-[#474b51] pr-[3px] text-[7px] leading-[7px] text-[#c0c4c8]">
        <span className="mr-[3px]">–</span><span>×</span>
      </div>
      <div className="relative flex-1">
        <span className="absolute left-[3px] top-[3px] text-[7px] leading-[8px] text-[#8f8f8f]">Max. True Peak in dBTP</span>
        <span className="absolute left-[264px] top-[13px] text-[6px] leading-[8px] text-[#b0b0b0]">-13.4</span>
        <span className="absolute right-[3px] top-[1px] text-[6.800px] leading-[8px] text-[#8f8f8f]">Programmlautheit in LUFS</span>
        <span className="absolute right-[3px] top-[8px] text-[17px] leading-[17px] font-bold text-[#b80f0f]">-34.0</span>
        <div className="absolute right-[2px] top-[20px] w-[86px] h-[5px] rounded-[1px] bg-linear-to-b from-[#a8a8a8] to-[#585858] text-center text-[6.500px] leading-[5px] text-[#2c2c2c] whitespace-nowrap overflow-hidden">Master Normalisierung</div>
        <div className="absolute inset-x-0 top-[26px] h-[1.500px] bg-[#2a2a2a]" />
        <div className="absolute right-[3px] bottom-[5px] flex items-center gap-[2px]">
          <span className="text-[4px] text-[#555] mr-[1px] tracking-[1px]">·····</span>
          <span className="w-[5px] h-[5px] border border-[#606060]" />
          <span className="w-[5px] h-[5px] bg-[#909090]" />
          <span className="w-[5px] h-[5px] border border-[#606060]" />
        </div>
      </div>
    </div>
  );
}

function Workspace() {
  return (
    <div className="flex items-center h-[17px] bg-[#4a4e55] pl-[2px] text-[6px] text-[#a4a8ac]">
      <span className="w-[41px] whitespace-nowrap">Arbeitsbereich:</span>
      <div className="flex items-center w-[89px] h-[11px] bg-[#2a2c2f] text-[#8a8e92] pl-[24px]">
        Master Setup<Caret className="ml-auto mr-[3px]" />
      </div>
      <div className="ml-[11px] w-[12px] h-[12px] bg-[#a8d4f4] flex items-center justify-center">
        <svg width="8" height="8" viewBox="0 0 8 8"><rect x="0" y="1" width="3" height="2" fill="#2a5aa0" /><rect x="4" y="0" width="3" height="2" fill="#2a5aa0" /><rect x="1" y="5" width="4" height="2" fill="#2a5aa0" /></svg>
      </div>
      <svg width="10" height="9" viewBox="0 0 10 9" className="ml-[3px] shrink-0" stroke="#c0d4e8"><path d="M2 0v9M5 0v9M8 0v9" /><path d="M1 3h2M4 6h2M7 2h2" stroke="#3a6ab0" /></svg>
      <div className="ml-[3px] w-[12px] h-[12px] bg-[#a8d4f4] flex items-center justify-center gap-[1px]">
        <span className="border-y-[2px] border-l-[3px] border-y-transparent border-l-[#2a5aa0]" />
        <span className="w-[4px] h-[4px] rounded-full bg-[#c82020]" />
      </div>
      <Sep className="ml-[7px]" />
      <div className="flex items-center gap-[3px] ml-[1px]">
        <span className="w-[10px] h-[5px] bg-linear-to-r from-[#e8a020] to-[#e8d8b0]" />
        <span className="w-[10px] h-[5px] bg-linear-to-r from-[#e8d8b0] to-[#e8a020]" />
        <span className="w-[11px] h-[6px] bg-linear-to-r from-[#e88020] to-[#d8c8b8]" />
        <span className="w-[11px] h-[6px] bg-linear-to-r from-[#d8c8b8] to-[#e88020]" />
      </div>
      <div className="flex items-center gap-[4px] ml-[7px]">
        <span className="w-[11px] h-[8px] rounded-full border-2 border-[#b82a2a] bg-[#4a5058]" />
        <span className="w-[8px] h-[10px] rounded-full border-2 border-[#2a80d0] bg-[#a0b0c0]" />
        <span className="w-[11px] h-[8px] rounded-full border-2 border-[#b82a2a] bg-[#80a040]" />
        <span className="w-[8px] h-[10px] rounded-full border-2 border-[#2a80d0] bg-[#80a040]" />
      </div>
      <Sep className="ml-[4px]" />
      <div className="flex items-center gap-[3px] ml-[3px]">
        <Icon w={11} h={9} vb="0 0 11 9" d="M0 4h4l1-3 1 3h5v1H6L5 8 4 5H0z" fill="#e0c890" />
        <Icon w={11} h={9} vb="0 0 11 9" d="M0 4h4l1-3 1 3h5v1H6L5 8 4 5H0z" fill="#c8b480" />
        <svg width="11" height="6" viewBox="0 0 11 6" stroke="#c0c4c8"><path d="M0 .5h11M0 3h11M0 5.500h11" /></svg>
        <svg width="12" height="10" viewBox="0 0 12 10" className="ml-[1px]">
          <rect y="6" width="12" height="2" fill="#e8d020" /><rect y="8" width="12" height="2" fill="#2060d0" />
          <path d="M1 6l2-3 2 1 2-4 2 3 2 3z" fill="#e04020" />
        </svg>
      </div>
    </div>
  );
}

export default function App() {
  return (
    <div className="flex flex-col w-[1000px] h-[542px] overflow-hidden bg-black font-['Liberation_Sans',Arial,sans-serif]">
      {/* Window title */}
      <div className="relative flex items-center h-[11px] bg-[radial-gradient(ellipse_130px_14px_at_530px_11px,#b8f0f0_0%,#3ea8a8_45%,transparent_100%),radial-gradient(ellipse_60px_8px_at_655px_12px,#e4ffff_0%,#4ab0b0_50%,transparent_100%),linear-gradient(90deg,#3a4244_0%,#364a4c_30%,#2a5a5e_48%,#1f6468_60%,#10282c_72%,#0e1418_100%)] text-[6.1px] text-[#a8b2b2]">
        <span className="ml-[1px] mr-[1.500px] w-[8px] h-[10px] bg-[#124a80] text-center text-[8px] font-bold leading-[10px] text-white">S</span>
        <span className="whitespace-pre">Samplitude Pro X4 Suite (Build 681, 64 Bit)  -  Crisis Core - Final Fantasy 7 - Wings Of Freedom (Master Mi Remix Version 1.3 Alternative 4).VIP*  44100 Hz L: 00:38:17:02*</span>
        <div className="absolute right-[1px] top-0 flex h-[9px] rounded-b-[2px] bg-[#33363a] border-x border-b border-[#50545a] text-[#d4d4d4] text-[7px] leading-[8px]">
          <span className="w-[14px] text-center">–</span><span className="w-[14px] text-center">❐</span><span className="w-[25px] text-center font-bold">x</span>
        </div>
      </div>
      {/* Menu */}
      <div className="flex items-center h-[11px] pl-[4px] gap-[8px] bg-linear-to-b from-[#f4f5fa] to-[#dde1ef] border-b border-[#8a8e94] text-[6px] text-[#686c72]">
        {menu.map((m) => <span key={m}>{m}</span>)}
      </div>
      <Toolbar />
      <TabBar />
      {/* Editor */}
      <div className="flex h-[253px]">
        <TrackEditor />
        <TrackList />
        <Arranger />
        <Scroller />
      </div>
      {/* Docked view tabs */}
      <div className="flex items-center justify-end h-[7px] bg-linear-to-b from-[#666a70] to-[#53575d] border-b border-[#1c1e20] pr-[3px] text-[7px] leading-[6px] text-[#b4b8bc]">
        <span className="mr-[3px]">–</span><span>×</span>
      </div>
      <div className="flex h-[12px] bg-[#18191c]">
        {bottomTabs.map((t) => (
          <div
            key={t.name}
            className={
              t.active
                ? "flex items-center justify-center h-full bg-[#a0d0f6] text-[#1f4868] text-[6px]"
                : "flex items-center justify-center h-full bg-linear-to-b from-[#44474b] to-[#2a2c2f] border-r border-[#17181a] text-[#85898d] text-[6px]"
            }
            style={{ width: t.w }}
          >
            {t.name}{t.active && <span className="ml-[3px]">×</span>}
          </div>
        ))}
        <div className="flex-1" />
        <span className="w-[11px] bg-[#2c2e31] text-center text-[10px] leading-[12px] text-[#c0c4c8]">+</span>
      </div>
      {/* Visualisation */}
      <div className="flex h-[141px] bg-black">
        <Goniometer />
        <Balance />
        <Phase />
        <Analyzer />
      </div>
      <div className="flex h-[50px] mt-[1px]">
        <Transport />
        <LoudnessPanel />
      </div>
      <Workspace />
      {/* Status */}
      <div className="flex items-center flex-1 bg-[#f3f0ee] text-[6.500px] text-[#33363a]">
        <span className="pl-[1px] w-[813px] whitespace-pre">DSP: 10 %  [19 % Max]    Disk:  0 %</span>
        <span className="w-[93px] h-full border-l border-[#d0d0d0] pl-[2px] leading-[10px] whitespace-pre">PlayBuf 1/4  Max 1  Err 0</span>
        <span className="h-full border-l border-[#d0d0d0] pl-[3px] leading-[10px]">Track 21</span>
      </div>
    </div>
  );
}
